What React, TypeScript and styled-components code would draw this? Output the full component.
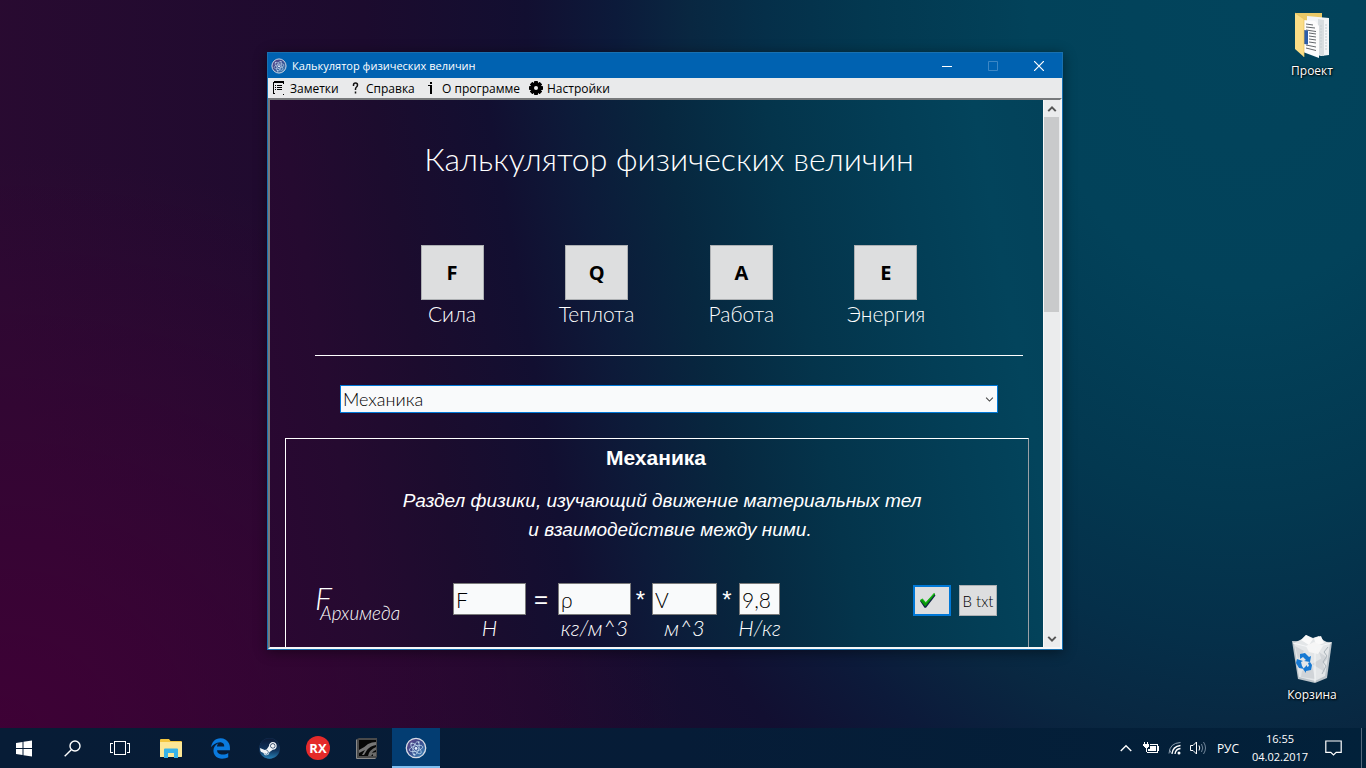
import React, { useState } from "react";
import styled, { createGlobalStyle, css } from "styled-components";
import { FaEdgeLegacy, FaSteam } from "react-icons/fa6";

const uiFont = `"Segoe UI", "Open Sans", "Noto Sans", sans-serif`;
const gothicFont = `"Century Gothic", Lato, "Open Sans", sans-serif`;
const arialFont = `Arial, "Liberation Sans", sans-serif`;

const GlobalStyle = createGlobalStyle`
  *, *::before, *::after { box-sizing: border-box; }
  body { margin: 0; font-family: ${uiFont}; font-size: 12px; overflow: hidden; }
  h1, h2, p { margin: 0; }
  button, input, select { font: inherit; margin: 0; }
`;

/* ---------- desktop ---------- */

const Screen = styled.div`
  display: flex;
  flex-direction: column;
  height: 100vh;
  background:
    radial-gradient(ellipse 50% 75% at 0% 95%, rgba(64, 0, 54, 0.9), rgba(64, 0, 54, 0) 100%),
    radial-gradient(
      ellipse 92% 220% at 91% 0%,
      #02445c 0%,
      #02425a 17%,
      #033850 30%,
      #052f49 38%,
      #092741 44%,
      #0c1a3a 50%,
      #120f31 57%,
      #1c0b2e 70%,
      #290a31 100%
    );
`;

const Desktop = styled.main`
  position: relative;
  flex: 1;
  min-height: 0;
  display: flex;
  justify-content: flex-end;
`;

const Shortcuts = styled.div`
  width: 108px;
  padding: 10px 0 24px;
  display: flex;
  flex-direction: column;
  justify-content: space-between;
`;

const Shortcut = styled.button`
  border: 0;
  padding: 0;
  background: none;
  color: #fff;
  display: flex;
  flex-direction: column;
  align-items: center;
  gap: 2px;
  font-size: 12px;
  line-height: 18px;
  text-shadow: 1px 1px 2px #000, 0 0 2px #000;
`;

/* ---------- application window ---------- */

const Window = styled.section`
  position: absolute;
  left: 267px;
  top: 52px;
  width: 796px;
  max-width: calc(100vw - 267px);
  height: 598px;
  display: flex;
  flex-direction: column;
  border: 1px solid #1870b0;
  background: #e9eaeb;
  box-shadow: 0 2px 12px rgba(0, 0, 0, 0.45);
`;

const TitleBar = styled.header`
  height: 25px;
  flex: none;
  padding-left: 3px;
  display: flex;
  align-items: center;
  background: #0062b1;
  color: #fff;
`;

const WindowTitle = styled.span`
  flex: 1;
  padding-left: 5px;
  font-size: 11px;
`;

const CaptionButton = styled.button`
  width: 46px;
  height: 25px;
  padding: 0;
  border: 0;
  background: none;
  color: #fff;
  display: grid;
  place-items: center;

  &:disabled { color: #3c87c5; }
`;

const MenuBar = styled.nav`
  height: 20px;
  flex: none;
  padding-left: 4px;
  display: flex;
  align-items: center;
`;

const MenuItem = styled.button<{ $width: number }>`
  width: ${(p) => p.$width}px;
  height: 20px;
  padding: 0;
  border: 0;
  background: none;
  color: #000;
  display: flex;
  align-items: center;
  gap: 3px;
  white-space: nowrap;
`;

const Frame = styled.div`
  flex: 1;
  min-height: 0;
  display: flex;
  border-style: solid;
  border-width: 2px;
  border-color: #77797b #f6f7f8 #f6f7f8 #77797b;
`;

const Content = styled.div`
  flex: 1;
  min-width: 0;
  overflow: hidden;
  color: #fff;
  background: linear-gradient(
    80deg,
    #2b0732 0%,
    #250a30 12%,
    #1c0c2e 23%,
    #120f31 36%,
    #0d1a39 45%,
    #07273f 56%,
    #04344b 68%,
    #033e56 82%,
    #03445c 92%,
    #03425a 100%
  );
`;

const Heading = styled.h1`
  margin: 0 20px 0 45px;
  padding-top: 39px;
  text-align: center;
  font: 300 32px/40px ${gothicFont};
`;

const Quantities = styled.div`
  margin: 66px 117px 0 142px;
  display: flex;
  justify-content: space-between;
`;

const Quantity = styled.label`
  width: 80px;
  display: flex;
  flex-direction: column;
  align-items: center;
  font: 300 21px/28px ${gothicFont};
`;

const QuantityButton = styled.button`
  width: 63px;
  height: 55px;
  padding: 0;
  border: 1px solid #adb0b3;
  background: #dddedf;
  color: #000;
  font: 700 20px/28px ${uiFont};
`;

const Divider = styled.hr`
  margin: 27px 20px 29px 45px;
  border: 0;
  border-top: 1px solid #fff;
`;

const SelectBox = styled.div`
  margin: 0 45px 0 70px;
  display: grid;
  align-items: center;

  > * { grid-area: 1 / 1; }
  > svg { justify-self: end; margin-right: 4px; pointer-events: none; }
`;

const SectionSelect = styled.select`
  width: 100%;
  height: 28px;
  padding: 0 2px;
  appearance: none;
  border: 1px solid #0078d7;
  border-radius: 0;
  background: #f9fafb;
  color: #000;
  font: 300 18px/24px ${gothicFont};
  outline: 0;
`;

const Panel = styled.section`
  height: 400px;
  margin: 25px 14px 0 15px;
  padding: 5px 31px 0 29px;
  border: 1px solid #fff;
  border-right-color: #9aa0a6;
`;

const PanelTitle = styled.h2`
  text-align: center;
  font: 700 21px/28px ${arialFont};
`;

const Description = styled.div`
  margin: 14px 0 39px;
  text-align: center;
  font: italic 400 19px/29px ${arialFont};
`;

const DescriptionLine = styled.p<{ $indent: number }>`
  padding-left: ${(p) => p.$indent}px;
`;

const Formula = styled.form`
  display: flex;
  align-items: flex-start;
`;

const FormulaName = styled.div`
  width: 138px;
  display: flex;
  flex-direction: column;
  font: italic 300 19px/20px ${gothicFont};
`;

const FormulaSymbol = styled.span`
  height: 20px;
  font-size: 32px;
  line-height: 30px;
`;

const FormulaIndex = styled.sub`
  padding-left: 5px;
  vertical-align: baseline;
  font-size: 19px;
`;

const Term = styled.label<{ $width: number }>`
  width: ${(p) => p.$width}px;
  display: flex;
  flex-direction: column;
  align-items: center;
  white-space: nowrap;
  font: italic 300 22px/26px ${gothicFont};
`;

const TermInput = styled.input`
  width: 100%;
  height: 32px;
  padding: 0 2px;
  border: 1px solid #7a7a7a;
  border-radius: 0;
  background: #f9fafb;
  color: #000;
  font: 300 21px/28px ${gothicFont};
  outline: 0;
`;

const Operator = styled.span<{ $width: number }>`
  width: ${(p) => p.$width - 2}px;
  margin-right: 2px;
  text-align: center;
  font: 400 24px/34px ${arialFont};
`;

const FormulaActions = styled.div`
  margin: 2px 0 0 auto;
  display: flex;
  gap: 8px;
`;

const ActionButton = styled.button<{ $focused?: boolean }>`
  width: 38px;
  height: 31px;
  padding: 0;
  border: 1px solid #adb0b3;
  background: #dddedf;
  color: #000;
  font: 300 15px/20px ${gothicFont};
  display: flex;
  align-items: center;
  justify-content: center;
  white-space: nowrap;
  ${(p) =>
    p.$focused &&
    css`
      border: 2px solid #0078d7;
      justify-content: flex-start;
      padding-left: 4px;
    `}
`;

const ScrollBar = styled.div`
  width: 17px;
  flex: none;
  display: flex;
  flex-direction: column;
  justify-content: space-between;
  background: #ebeced;
  border-left: 1px solid #f8f8f8;
`;

const ScrollArrow = styled.button`
  height: 17px;
  padding: 0 1px 0 0;
  border: 0;
  background: none;
  display: grid;
  place-items: center;
`;

const ScrollTrack = styled.div`
  flex: 1;
`;

const ScrollThumb = styled.div`
  height: 38%;
  width: 15px;
  background: #c9cacb;
`;

/* ---------- taskbar ---------- */

const TaskBar = styled.footer`
  height: 40px;
  flex: none;
  display: flex;
  align-items: stretch;
  background: linear-gradient(90deg, #071c36, #061c37 50%, #02213a);
  color: #fff;
`;

const TaskGroup = styled.div<{ $gap: number; $start: number }>`
  display: flex;
  gap: ${(p) => p.$gap}px;
  margin-left: ${(p) => p.$start}px;
`;

const TaskButton = styled.button<{ $active?: boolean }>`
  width: 48px;
  height: 40px;
  padding: 0;
  border: 0;
  background: ${(p) => (p.$active ? "#033d72" : "none")};
  box-shadow: ${(p) => (p.$active ? "inset 0 -2px 0 #7fbef0" : "none")};
  color: #fff;
  display: grid;
  place-items: center;
`;

const Tray = styled.div`
  margin-left: auto;
  display: flex;
  align-items: center;
`;

const TrayButton = styled.button<{ $width: number }>`
  width: ${(p) => p.$width}px;
  height: 40px;
  padding: 0;
  border: 0;
  background: none;
  color: #fff;
  font-size: 12px;
  display: grid;
  place-items: center;
`;

const Clock = styled.time`
  width: 66px;
  text-align: center;
  font-size: 11px;
  line-height: 18px;
`;

const ShowDesktop = styled.button`
  width: 5px;
  height: 40px;
  padding: 0;
  border: 0;
  border-left: 1px solid #55697d;
  background: none;
`;

/* ---------- drawings ---------- */

const AtomIcon = ({ size }: { size: number }) => (
  <svg width={size} height={size} viewBox="0 0 24 24" fill="none">
    <defs>
      <linearGradient id="atomFill" x1="0" y1="0" x2="1" y2="1">
        <stop offset="0" stopColor="#6a4a8c" />
        <stop offset="0.45" stopColor="#3b4a8c" />
        <stop offset="1" stopColor="#3c8fc0" />
      </linearGradient>
    </defs>
    <circle cx="12" cy="12" r="10.6" fill="url(#atomFill)" stroke="#d9dde6" strokeWidth="1.4" />
    <g stroke="#c3dcf0" strokeWidth="0.8">
      <ellipse cx="12" cy="12.500" rx="3" ry="7.500" transform="rotate(15 12 12.500)" />
      <ellipse cx="12" cy="12.500" rx="3" ry="7.500" transform="rotate(75 12 12.500)" />
      <ellipse cx="12" cy="12.500" rx="3" ry="7.500" transform="rotate(135 12 12.500)" />
    </g>
    <circle cx="12" cy="12.500" r="1.5" fill="#e8f4ff" />
    <circle cx="7" cy="7" r="1" fill="#c3dcf0" />
    <circle cx="15" cy="5.500" r="1" fill="#c3dcf0" />
    <circle cx="10" cy="19" r="1" fill="#c3dcf0" />
  </svg>
);

const NotesIcon = () => (
  <svg width="15" height="16" viewBox="0 0 15 16" shapeRendering="crispEdges">
    <path d="M2 1h10v2H2zM1 2h1v12H1zM11 3h1v1h-1zM3 5h1v1H3zM5 5h5v1H5zM3 7h1v1H3zM5 7h5v1H5zM3 9h1v1H3zM5 9h5v1H5zM11 14h1v1h-1zM2 13h1v1H2z" />
  </svg>
);

const HelpIcon = () => (
  <svg width="15" height="16" viewBox="0 0 15 16" fill="none" stroke="#111" strokeWidth="1.5">
    <path d="M5.5 6V5q0-2 2-2t2 2q0 1.200-1 2t-1 2v1M7.500 11.500v2" />
  </svg>
);

const InfoIcon = () => (
  <svg width="15" height="16" viewBox="0 0 15 16" shapeRendering="crispEdges">
    <path d="M6 2h2v2H6zM4 5h4v8H6V6H4zM6 13h2v1H6z" />
  </svg>
);

const GearIcon = () => (
  <svg width="16" height="16" viewBox="0 0 16 16">
    <g>
      {[0, 45, 90, 135].map((a) => (
        <rect key={a} x="6" y="1" width="4" height="14" rx="0.8" transform={`rotate(${a} 8 8)`} />
      ))}
      <circle cx="8" cy="8" r="5.400" />
    </g>
    <circle cx="8" cy="8" r="2" fill="#ececec" />
  </svg>
);

const Chevron = ({ dir, size, color, stroke }: { dir: "up" | "down"; size: number; color: string; stroke: number }) => (
  <svg width={size} height={size} viewBox="0 0 12 12" fill="none" stroke={color} strokeWidth={stroke}>
    <path d={dir === "up" ? "M1.500 8.500L6 4l4.500 4.500" : "M1.500 3.500L6 8l4.500-4.500"} />
  </svg>
);

const CheckIcon = () => (
  <svg width="18" height="17" viewBox="0 0 18 17">
    <path d="M1 9l2.500-2L7 11 15 2l1.500 1.500L7 15.800H5.500z" fill="#10204a" />
    <path d="M1 8.200l2.400-1.700L6.800 10.200 15 1l1.200 1.200L6.300 14.400z" fill="#0a980a" />
    <path d="M1.500 8.100l1.700-.9L6.800 11l8.600-9.600" fill="none" stroke="#22c822" strokeWidth="0.8" />
  </svg>
);

const ProjectFolderIcon = () => (
  <svg width="38" height="50" viewBox="0 0 38 50">
    <path d="M2 3h27v30l-20 5z" fill="#e9c867" />
    <path d="M14 6l22 2v37l-8 1-14-4z" fill="#f3f5f7" />
    <path d="M25 9l6 1v36l-6-2z" fill="#d8dde0" />
    <path d="M10 10l12 1 4 5v32l-16-6z" fill="#fcfcfc" />
    <path d="M28 15v24M33 14v26" stroke="#c5cdd2" strokeWidth="1" strokeDasharray="2 1" />
    <path d="M13 14l7 1M13 17l9 1M13 20l10 1.500M16 23l7 1M16 26l7 1M16 29l7 1M16 32l7 1M13 35l10 2M13 38l10 2.500" stroke="#64686c" strokeWidth="1" />
    <path d="M11 20l4 .5v14l-4-.5z" fill="#2c5da8" />
    <path d="M2 3l9 6v38L2 39z" fill="#fbdd86" />
    <path d="M2 3l9 6v38" fill="none" stroke="#e7c05c" strokeWidth="0.7" />
  </svg>
);

const RecycleBinIcon = () => (
  <svg width="44" height="50" viewBox="0 0 44 50">
    <path d="M2 7l40 1-5 36-12 5-17-4z" fill="#bcc4ca" />
    <path d="M4 9l8-4 4-4 7 3 6-2 4 4 7 4-5 32-10 5-16-4z" fill="#e3e6e8" />
    <path d="M11 6l5-5 7 4-4 6zM24 4l7-2 3 7-8 3z" fill="#fafafa" />
    <path d="M16 12l8-4 9 4-5 8-9-2z" fill="#f6f6f6" />
    <path d="M5 12l9 5-6 8zM29 18l9 6-5 6zM22 30l10-6 3 14zM12 37l10-6 3 14-14-2z" fill="#d0d4d8" />
    <path d="M3 9l20 5 18-5M25 14v34" fill="none" stroke="#f5f7f8" strokeWidth="1" />
    <path d="M38 13l-4 5 3 4-4 6 3 4-4 8" fill="none" stroke="#abb4bb" strokeWidth="1" />
    <g fill="#1679d3">
      <path d="M10 20l5-1 4 4 2-1-1 6-6-1 2-1-3-3-3 2z" />
      <path d="M7 25l6 2-2 1 1 4 2 3-5-1-3-5z" />
      <path d="M20 28l2 3-1 5-5 1v2l-3-4 4-4v2l2-1-1-3z" />
    </g>
  </svg>
);

const WindowsIcon = () => (
  <svg width="16" height="17" viewBox="0 0 16 17" fill="#fff">
    <path d="M0 3l6.500-1v6H0zM7.500 1.800L16 .5V8H7.500zM0 9h6.500v6L0 14zM7.500 9H16v7.500l-8.500-1.300z" />
  </svg>
);

const SearchIcon = () => (
  <svg width="17" height="17" viewBox="0 0 17 17" fill="none" stroke="#fff" strokeWidth="1.400">
    <circle cx="11" cy="6" r="5" />
    <path d="M7.300 9.700L.7 16.300" />
  </svg>
);

const TaskViewIcon = () => (
  <svg width="20" height="15" viewBox="0 0 20 15" fill="none" stroke="#fff" shapeRendering="crispEdges">
    <path d="M4.500 .5h11v13h-11zM3 2.500H.5v9H3M17 2.500h2.500v9H17" />
  </svg>
);

const ExplorerIcon = () => (
  <svg width="22" height="19" viewBox="0 0 22 19">
    <path d="M0 1q0-1 1-1h8l1.500 2H21q1 0 1 1v14q0 1-1 1H0z" fill="#f4c63f" />
    <path d="M0 3h22v14q0 1-1 1H0z" fill="#fde796" />
    <path d="M4 10.500q0-1 1-1h12q1 0 1 1V19h-4v-5H8v5H4z" fill="#38b3e8" />
  </svg>
);

const SteamBadge = styled.span`
  width: 21px;
  height: 21px;
  border-radius: 50%;
  background: radial-gradient(circle, #f2f5f8 60%, #173a63 66%);
  display: grid;
  place-items: center;

  svg { fill: url(#steamFill); }
`;

const SteamDefs = styled.svg`
  display: block;
  width: 0;
  height: 0;
  grid-area: 1 / 1;
`;

const SteamGlyph = styled(FaSteam)`
  grid-area: 1 / 1;
`;

const SteamIcon = () => (
  <SteamBadge>
    <SteamDefs aria-hidden="true">
      <defs>
        <linearGradient id="steamFill" x1="0" y1="0" x2="0" y2="1">
          <stop offset="0" stopColor="#0c1a36" />
          <stop offset="0.6" stopColor="#123660" />
          <stop offset="1" stopColor="#2680b5" />
        </linearGradient>
      </defs>
    </SteamDefs>
    <SteamGlyph size={21} />
  </SteamBadge>
);

const RxBadge = styled.span`
  width: 24px;
  height: 24px;
  border-radius: 50%;
  background: #e42a2a;
  color: #fff;
  font: 700 13px/24px ${uiFont};
`;

const NvidiaIcon = () => (
  <svg width="22" height="21" viewBox="0 0 22 21">
    <path d="M1 1l2-1h18v19l-2 2H1z" fill="#4a4a4a" />
    <path d="M3 2h17v16H3z" fill="#070707" />
    <path d="M3 12q6-3 9-6 4-2 8-2v3q-6 1-9 5l-3 5H6l3-5-6 3z" fill="#777" />
    <path d="M12 18q1-6 8-9v3q-3 1-4 3l4-1v4h-3v-2l-2 2z" fill="#6b6b6b" />
    <path d="M.5 1.500v19h19" fill="none" stroke="#8a8a8a" />
  </svg>
);

const BatteryIcon = () => (
  <svg width="16" height="14" viewBox="0 0 16 14" fill="#fff" shapeRendering="crispEdges">
    <path d="M1 1h1v2h2V1h1v2h1v3H5v1H4v4H3V7H2V6H1V5H0V3h1z" />
    <path d="M7 3h8v2h1v5h-1v2H4v-1h10V4H7z" />
    <path d="M7 5h6v5H5V8h2z" />
  </svg>
);

const WifiIcon = () => (
  <svg width="14" height="14" viewBox="0 0 14 14" fill="none" stroke="#fff">
    <path d="M1 12.500Q1.500 2 12.500 1.500" stroke="#8fa0b0" />
    <path d="M4 13q.5-7.500 8.500-8.500M7 13q.5-5 5.500-5.500" strokeWidth="1.300" />
    <path d="M1.500 9l2.500 4" stroke="#8fa0b0" />
    <circle cx="11" cy="12" r="1.500" fill="#fff" stroke="none" />
  </svg>
);

const VolumeIcon = () => (
  <svg width="17" height="14" viewBox="0 0 17 14" fill="none" stroke="#fff">
    <path d="M.5 4.500h2.500l3.500-3.500v12L3 9.500H.5z" />
    <path d="M9 4.500q1.500 2.500 0 5" />
    <path d="M11.500 3q2.500 4 0 8M13.500 1q4 6 0 12" stroke="#71869a" />
  </svg>
);

const NotificationIcon = () => (
  <svg width="17" height="16" viewBox="0 0 17 16" fill="none" stroke="#fff" strokeWidth="1.200">
    <path d="M.8 1h15.400v11.400h-5L8.500 15l-2.700-2.600h-5z" />
  </svg>
);

/* ---------- content ---------- */

const quantities = [
  { symbol: "F", name: "Сила" },
  { symbol: "Q", name: "Теплота" },
  { symbol: "A", name: "Работа" },
  { symbol: "E", name: "Энергия" },
];

const sections = ["Механика", "Теплота", "Электричество", "Оптика"];

const terms = [
  { value: "F", unit: "Н", width: 73, operator: "=", gap: 32 },
  { value: "ρ", unit: "кг/м^3", width: 73, operator: "*", gap: 21 },
  { value: "V", unit: "м^3", width: 65, operator: "*", gap: 22 },
  { value: "9,8", unit: "Н/кг", width: 41, operator: "", gap: 0 },
];

const FormulaRow = () => {
  const [values, setValues] = useState(terms.map((t) => t.value));
  return (
    <Formula onSubmit={(e) => e.preventDefault()}>
      <FormulaName>
        <FormulaSymbol>F</FormulaSymbol>
        <FormulaIndex>Архимеда</FormulaIndex>
      </FormulaName>
      {terms.map((t, i) => (
        <React.Fragment key={t.unit}>
          <Term $width={t.width}>
            <TermInput
              value={values[i]}
              onChange={(e) => setValues(values.map((v, j) => (j === i ? e.target.value : v)))}
            />
            {t.unit}
          </Term>
          {t.operator && <Operator $width={t.gap}>{t.operator}</Operator>}
        </React.Fragment>
      ))}
      <FormulaActions>
        <ActionButton type="submit" $focused aria-label="Вычислить">
          <CheckIcon />
        </ActionButton>
        <ActionButton type="button">В txt</ActionButton>
      </FormulaActions>
    </Formula>
  );
};

export default function App() {
  const [section, setSection] = useState(sections[0]);

  return (
    <>
      <GlobalStyle />
      <Screen>
        <Desktop>
          <Shortcuts>
            <Shortcut>
              <ProjectFolderIcon />
              Проект
            </Shortcut>
            <Shortcut>
              <RecycleBinIcon />
              Корзина
            </Shortcut>
          </Shortcuts>

          <Window>
            <TitleBar>
              <AtomIcon size={16} />
              <WindowTitle>Калькулятор физических величин</WindowTitle>
              <CaptionButton aria-label="Свернуть">
                <svg width="10" height="10" shapeRendering="crispEdges"><path d="M0 5h10v1H0z" fill="currentColor" /></svg>
              </CaptionButton>
              <CaptionButton aria-label="Развернуть" disabled>
                <svg width="10" height="10" fill="none" stroke="currentColor"><path d="M.5 .5h9v9h-9z" /></svg>
              </CaptionButton>
              <CaptionButton aria-label="Закрыть">
                <svg width="10" height="10" fill="none" stroke="currentColor" strokeWidth="1.200"><path d="M0 0l10 10M10 0L0 10" /></svg>
              </CaptionButton>
            </TitleBar>
            <MenuBar>
              <MenuItem $width={76}><NotesIcon />Заметки</MenuItem>
              <MenuItem $width={76}><HelpIcon />Справка</MenuItem>
              <MenuItem $width={104}><InfoIcon />О программе</MenuItem>
              <MenuItem $width={84}><GearIcon />Настройки</MenuItem>
            </MenuBar>
            <Frame>
              <Content>
                <Heading>Калькулятор физических величин</Heading>
                <Quantities>
                  {quantities.map((q) => (
                    <Quantity key={q.symbol}>
                      <QuantityButton type="button">{q.symbol}</QuantityButton>
                      {q.name}
                    </Quantity>
                  ))}
                </Quantities>
                <Divider />
                <SelectBox>
                  <SectionSelect aria-label="Раздел" value={section} onChange={(e) => setSection(e.target.value)}>
                    {sections.map((s) => <option key={s}>{s}</option>)}
                  </SectionSelect>
                  <Chevron dir="down" size={9} color="#444" stroke={1.4} />
                </SelectBox>
                <Panel>
                  <PanelTitle>Механика</PanelTitle>
                  <Description>
                    <DescriptionLine $indent={12}>Раздел физики, изучающий движение материальных тел</DescriptionLine>
                    <DescriptionLine $indent={28}>и взаимодействие между ними.</DescriptionLine>
                  </Description>
                  <FormulaRow />
                </Panel>
              </Content>
              <ScrollBar>
                <ScrollArrow aria-label="Вверх"><Chevron dir="up" size={10} color="#555" stroke={2.4} /></ScrollArrow>
                <ScrollTrack><ScrollThumb /></ScrollTrack>
                <ScrollArrow aria-label="Вниз"><Chevron dir="down" size={10} color="#555" stroke={2.4} /></ScrollArrow>
              </ScrollBar>
            </Frame>
          </Window>
        </Desktop>

        <TaskBar>
          <TaskGroup $gap={0} $start={0}>
            <TaskButton aria-label="Пуск"><WindowsIcon /></TaskButton>
            <TaskButton aria-label="Поиск"><SearchIcon /></TaskButton>
            <TaskButton aria-label="Представление задач"><TaskViewIcon /></TaskButton>
          </TaskGroup>
          <TaskGroup $gap={1} $start={3}>
            <TaskButton aria-label="Проводник"><ExplorerIcon /></TaskButton>
            <TaskButton aria-label="Edge"><FaEdgeLegacy size={21} color="#0a7ade" /></TaskButton>
            <TaskButton aria-label="Steam"><SteamIcon /></TaskButton>
            <TaskButton><RxBadge>RX</RxBadge></TaskButton>
            <TaskButton aria-label="NVIDIA"><NvidiaIcon /></TaskButton>
            <TaskButton aria-label="Калькулятор" $active><AtomIcon size={22} /></TaskButton>
          </TaskGroup>
          <Tray>
            <TrayButton $width={24} aria-label="Значки"><Chevron dir="up" size={14} color="#fff" stroke={1.2} /></TrayButton>
            <TrayButton $width={25} aria-label="Батарея"><BatteryIcon /></TrayButton>
            <TrayButton $width={24} aria-label="Сеть"><WifiIcon /></TrayButton>
            <TrayButton $width={22} aria-label="Звук"><VolumeIcon /></TrayButton>
            <TrayButton $width={38}>РУС</TrayButton>
            <Clock>16:55<br />04.02.2017</Clock>
            <TrayButton $width={40} aria-label="Уведомления"><NotificationIcon /></TrayButton>
            <TrayButton $width={8} aria-hidden="true" tabIndex={-1} />
            <ShowDesktop aria-label="Показать рабочий стол" />
          </Tray>
        </TaskBar>
      </Screen>
    </>
  );
}
